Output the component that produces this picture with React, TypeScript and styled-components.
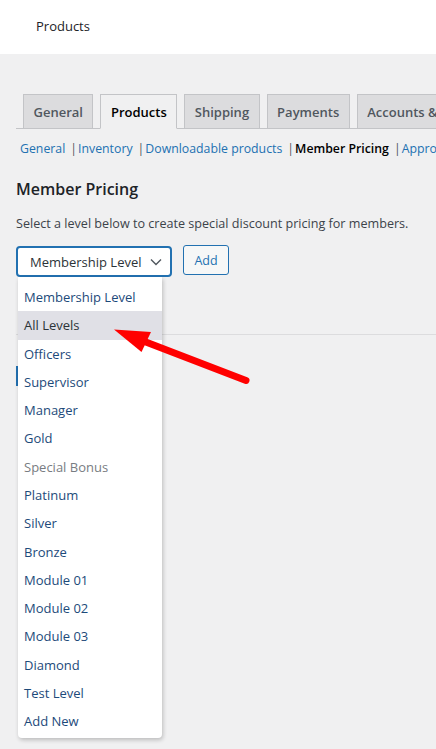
import React from 'react'
import { styled, createGlobalStyle } from 'styled-components'

const GlobalStyle = createGlobalStyle`
  html, body {
    margin: 0;
    padding: 0;
    background: #f0f0f1;
    overflow: hidden;
  }
  body {
    font-family: "Open Sans", "Noto Sans", "Liberation Sans", sans-serif;
    color: #3c434a;
  }
`

const tabs = ['General', 'Products', 'Shipping', 'Payments', 'Accounts & Privacy']
const sections = ['General', 'Inventory', 'Downloadable products', 'Member Pricing', 'Approval']
const levels = [
  'Membership Level',
  'All Levels',
  'Officers',
  'Supervisor',
  'Manager',
  'Gold',
  'Special Bonus',
  'Platinum',
  'Silver',
  'Bronze',
  'Module 01',
  'Module 02',
  'Module 03',
  'Diamond',
  'Test Level',
  'Add New',
]

const App = () => {
  return (
    <Page>
      <GlobalStyle />
      <TopBar>Products</TopBar>
      <Wrap>
        <TabBar>
          {tabs.map((t) => (
            <Tab key={t} $active={t === 'Products'}>{t}</Tab>
          ))}
        </TabBar>
        <SubNav>
          {sections.map((s, i) => (
            <React.Fragment key={s}>
              {i > 0 && <Sep>|</Sep>}
              <SubLink $current={s === 'Member Pricing'}>{s}</SubLink>
            </React.Fragment>
          ))}
        </SubNav>
        <Title>Member Pricing</Title>
        <Desc>Select a level below to create special discount pricing for members.</Desc>
        <Controls>
          <SelectWrap>
            <SelectBox>
              Membership Level
              <svg width="12" height="8" viewBox="0 0 12 8">
                <path d="M1 1.5 L6 6.5 L11 1.5" fill="none" stroke="#50575e" strokeWidth="1.4" />
              </svg>
            </SelectBox>
            <Menu>
              {levels.map((l) => (
                <MenuItem key={l} $hover={l === 'All Levels'} $disabled={l === 'Special Bonus'}>
                  {l}
                </MenuItem>
              ))}
            </Menu>
          </SelectWrap>
          <AddButton>Add</AddButton>
        </Controls>
        <Divider />
        <BlueMark />
      </Wrap>
      <Annotation viewBox="0 0 436 749" width="436" height="749">
        <line x1="246" y1="380.5" x2="138" y2="339" stroke="#ff0000" strokeWidth="7" strokeLinecap="round" />
        <polygon points="114,329.5 151,332 141.5,352" fill="#ff0000" />
      </Annotation>
    </Page>
  )
}

export default App

const Page = styled.div`
  position: relative;
  width: 436px;
  height: 749px;
  overflow: hidden;
`

const TopBar = styled.div`
  height: 54px;
  background: #fff;
  display: flex;
  align-items: center;
  padding: 0 0 2px 36px;
  box-sizing: border-box;
  font-size: 13px;
  color: #1d2327;
`

const Wrap = styled.div`
  padding-left: 16px;
`

const TabBar = styled.nav`
  margin-top: 40px;
  padding-left: 7px;
  height: 34px;
  display: flex;
  column-gap: 7px;
  border-bottom: 1px solid #c3c4c7;
  white-space: nowrap;
`

const Tab = styled.div<{ $active?: boolean }>`
  box-sizing: border-box;
  height: ${(p) => (p.$active ? '35px' : '34px')};
  padding: 0 9.5px;
  display: flex;
  align-items: center;
  font-size: 13px;
  font-weight: 600;
  color: ${(p) => (p.$active ? '#000' : '#50575e')};
  background: ${(p) => (p.$active ? '#f0f0f1' : '#dcdcde')};
  border: 1px solid #c3c4c7;
  border-bottom: ${(p) => (p.$active ? '1px solid #f0f0f1' : 'none')};
  flex-shrink: 0;
`

const SubNav = styled.div`
  margin-top: 9px;
  padding-left: 4px;
  height: 20px;
  display: flex;
  align-items: center;
  font-size: 12.3px;
  white-space: nowrap;
`

const Sep = styled.span`
  color: #50575e;
  padding: 0 1px 0 5px;
`

const SubLink = styled.span<{ $current?: boolean }>`
  color: ${(p) => (p.$current ? '#000' : '#2271b1')};
  font-weight: ${(p) => (p.$current ? 600 : 400)};
`

const Title = styled.h2`
  margin: 19px 0 0;
  height: 24px;
  line-height: 24px;
  font-size: 16px;
  font-weight: 600;
  color: #1d2327;
`

const Desc = styled.p`
  margin: 14px 0 0;
  line-height: 18px;
  font-size: 12.6px;
  color: #3c434a;
`

const Controls = styled.div`
  margin-top: 12px;
  display: flex;
  align-items: flex-start;
  column-gap: 11px;
`

const SelectWrap = styled.div`
  position: relative;
  margin-top: 1px;
`

const SelectBox = styled.div`
  box-sizing: border-box;
  width: 156px;
  height: 31px;
  border: 2px solid #2271b1;
  border-radius: 4px;
  background: #fff;
  display: flex;
  align-items: center;
  justify-content: space-between;
  padding: 0 8px 0 12px;
  font-size: 13px;
  color: #2c3338;
`

const Menu = styled.div`
  position: absolute;
  top: 31px;
  left: 2px;
  width: 144px;
  box-sizing: border-box;
  padding: 6px 0 3px;
  background: #fff;
  border-radius: 0 0 4px 4px;
  box-shadow: 1px 2px 4px rgba(0, 0, 0, 0.22);
  z-index: 2;
`

const MenuItem = styled.div<{ $hover?: boolean; $disabled?: boolean }>`
  height: 28.27px;
  display: flex;
  align-items: center;
  padding-left: 6px;
  font-size: 13px;
  color: ${(p) => (p.$disabled ? '#787c82' : p.$hover ? '#2c3338' : '#1d4a7a')};
  background: ${(p) => (p.$hover ? '#e0e0e6' : 'transparent')};
`

const AddButton = styled.div`
  box-sizing: border-box;
  width: 46px;
  height: 30px;
  border: 1px solid #2271b1;
  border-radius: 3px;
  background: #f6f7f7;
  color: #2271b1;
  font-size: 12.5px;
  display: flex;
  align-items: center;
  justify-content: center;
`

const Divider = styled.div`
  margin-top: 57px;
  height: 1px;
  background: #dcdcde;
`

const BlueMark = styled.div`
  margin-top: 31px;
  width: 2px;
  height: 20px;
  background: #2271b1;
`

const Annotation = styled.svg`
  position: absolute;
  top: 0;
  left: 0;
  pointer-events: none;
  z-index: 3;
`
